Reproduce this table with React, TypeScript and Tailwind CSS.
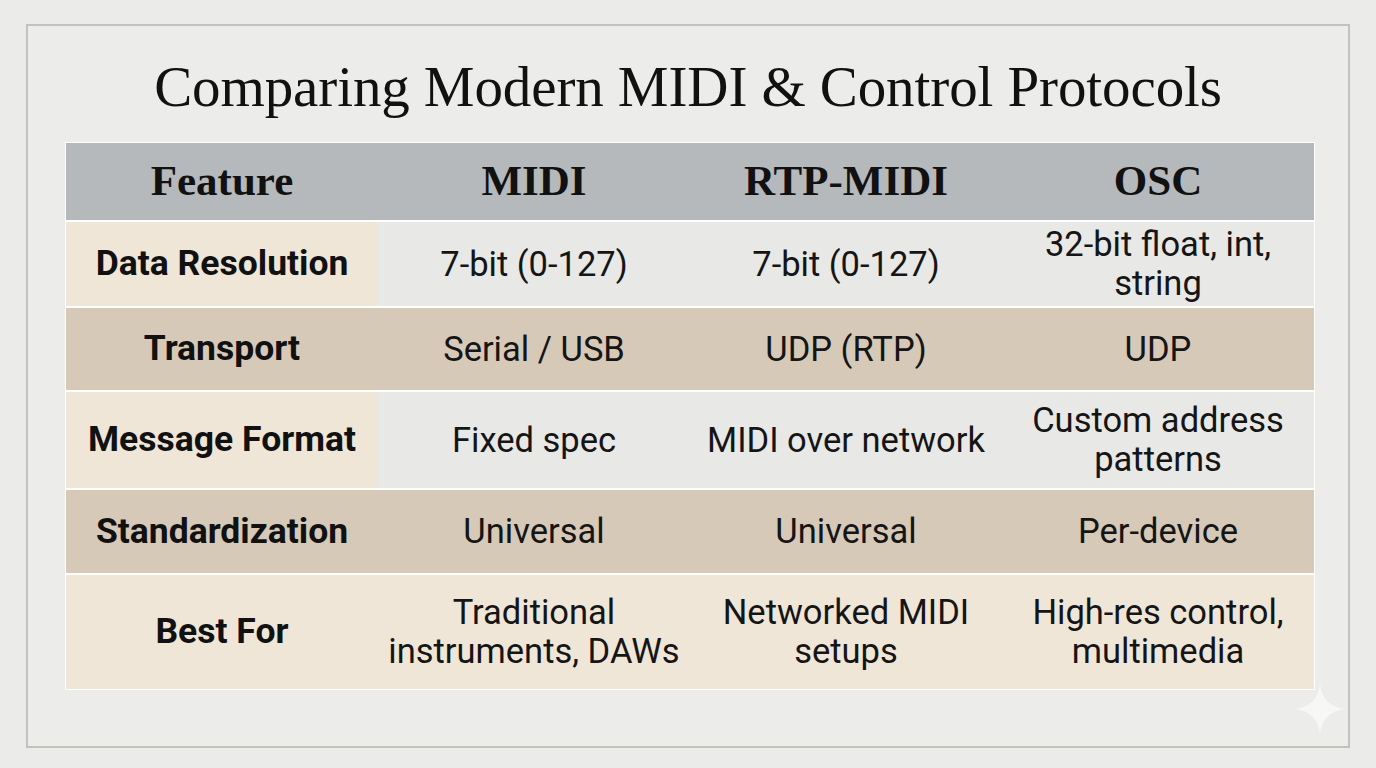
const COLS = ["Feature", "MIDI", "RTP-MIDI", "OSC"];

type Row = {
  label: string;
  cells: string[][];
  h: string;
  tone: "light" | "taupe" | "cream";
};

const ROWS: Row[] = [
  {
    label: "Data Resolution",
    cells: [["7-bit (0-127)"], ["7-bit (0-127)"], ["32-bit float, int,", "string"]],
    h: "h-[84px]",
    tone: "light",
  },
  {
    label: "Transport",
    cells: [["Serial / USB"], ["UDP (RTP)"], ["UDP"]],
    h: "h-[82px]",
    tone: "taupe",
  },
  {
    label: "Message Format",
    cells: [["Fixed spec"], ["MIDI over network"], ["Custom address", "patterns"]],
    h: "h-[96px]",
    tone: "light",
  },
  {
    label: "Standardization",
    cells: [["Universal"], ["Universal"], ["Per-device"]],
    h: "h-[83px]",
    tone: "taupe",
  },
  {
    label: "Best For",
    cells: [
      ["Traditional", "instruments, DAWs"],
      ["Networked MIDI", "setups"],
      ["High-res control,", "multimedia"],
    ],
    h: "h-[114px]",
    tone: "cream",
  },
];

const serif = { fontFamily: '"Liberation Serif", "DejaVu Serif", serif' };

function Sparkle() {
  return (
    <svg
      viewBox="0 0 48 48"
      className="absolute bottom-[12px] right-[3px] h-[50px] w-[50px]"
    >
      <path
        d="M24 0 C25.5 14 34 22.5 48 24 C34 25.5 25.5 34 24 48 C22.5 34 14 25.5 0 24 C14 22.5 22.5 14 24 0 Z"
        fill="#f7f7f6"
      />
    </svg>
  );
}

function cellBg(tone: Row["tone"], first: boolean) {
  if (tone === "taupe") return "bg-[#d6c9b8]";
  if (tone === "cream") return "bg-[#efe6d8]";
  return first ? "bg-[#efe6d8]" : "bg-[#e8e8e6]";
}

export default function App() {
  return (
    <div
      className="relative h-[768px] w-[1376px] overflow-hidden bg-[#ebebea] pl-[26px] pt-[24px]"
      style={{ fontFamily: 'Roboto, "Liberation Sans", sans-serif' }}
    >
      <div className="relative h-[724px] w-[1324px] border-2 border-[#c2c1bc] bg-[#ececeb] px-[37px]">
        <div className="flex h-[116px] items-center justify-center pt-[5px]">
          <h1
            className="text-[57px] leading-none tracking-[-0.1px] text-[#111]"
            style={serif}
          >
            Comparing Modern MIDI &amp; Control Protocols
          </h1>
        </div>

        <div className="flex w-[1250px] flex-col gap-[2px] bg-white p-[1px]">
          <div className="grid h-[77px] grid-cols-4 bg-[#b5b9bc]">
            {COLS.map((c) => (
              <div
                key={c}
                className="flex items-center justify-center text-[43px] font-bold text-[#111]"
                style={serif}
              >
                {c}
              </div>
            ))}
          </div>

          {ROWS.map((r) => (
            <div key={r.label} className={`grid grid-cols-4 ${r.h}`}>
              <div
                className={`flex items-center justify-center text-[35.5px] font-bold text-[#111] ${cellBg(r.tone, true)}`}
              >
                {r.label}
              </div>
              {r.cells.map((lines, i) => (
                <div
                  key={i}
                  className={`flex flex-col items-center justify-center text-[34.5px] leading-[39px] text-[#151515] ${cellBg(r.tone, false)}`}
                >
                  {lines.map((l) => (
                    <span key={l}>{l}</span>
                  ))}
                </div>
              ))}
            </div>
          ))}
        </div>

        <Sparkle />
      </div>
    </div>
  );
}
